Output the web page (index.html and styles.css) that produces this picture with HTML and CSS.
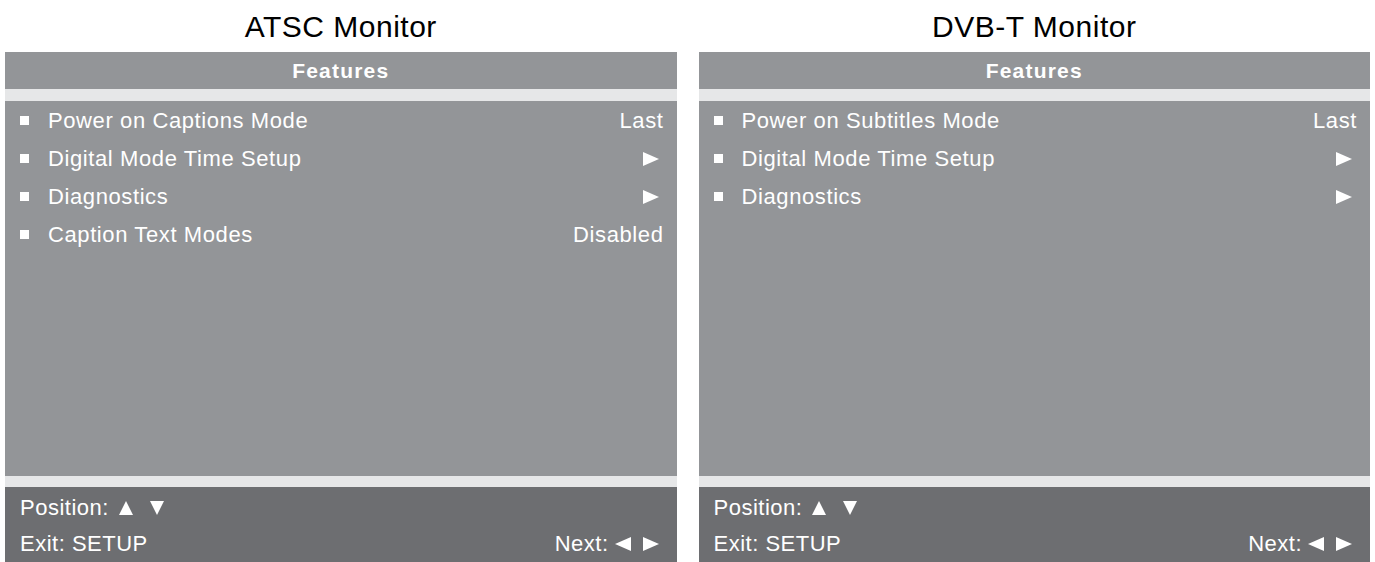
FILE: index.html
```html
<!DOCTYPE html>
<html lang="en">

<head>
    <meta charset="UTF-8">
    <title>Features Menu</title>
    <link rel="stylesheet" href="styles.css">
</head>

<body>
    <div class="page">
        <!-- ATSC -->
        <div class="monitor">
            <div class="monitor_title">ATSC Monitor</div>
            <div class="menu_head">Features</div>
            <div class="strip"></div>
            <ul class="menu_list">
                <li><span class="bullet"></span><span class="label">Power on Captions Mode</span><span class="value">Last</span></li>
                <li><span class="bullet"></span><span class="label">Digital Mode Time Setup</span><svg class="arrow" viewBox="0 0 16 14"><polygon points="0,0 16,7 0,14"/></svg></li>
                <li><span class="bullet"></span><span class="label">Diagnostics</span><svg class="arrow" viewBox="0 0 16 14"><polygon points="0,0 16,7 0,14"/></svg></li>
                <li><span class="bullet"></span><span class="label">Caption Text Modes</span><span class="value">Disabled</span></li>
            </ul>
            <div class="strip strip_low"></div>
            <div class="menu_foot">
                <div class="foot_line">Position:
                    <svg class="tri tri_up" viewBox="0 0 14 14"><polygon points="7,0 14,14 0,14"/></svg>
                    <svg class="tri tri_down" viewBox="0 0 14 14"><polygon points="0,0 14,0 7,14"/></svg>
                </div>
                <div class="foot_line">
                    <span>Exit: SETUP</span>
                    <span class="next">Next:
                        <svg class="tri tri_left" viewBox="0 0 16 14"><polygon points="16,0 16,14 0,7"/></svg>
                        <svg class="tri tri_right" viewBox="0 0 16 14"><polygon points="0,0 16,7 0,14"/></svg>
                    </span>
                </div>
            </div>
        </div>

        <!-- DVB-T -->
        <div class="monitor">
            <div class="monitor_title">DVB-T Monitor</div>
            <div class="menu_head">Features</div>
            <div class="strip"></div>
            <ul class="menu_list">
                <li><span class="bullet"></span><span class="label">Power on Subtitles Mode</span><span class="value">Last</span></li>
                <li><span class="bullet"></span><span class="label">Digital Mode Time Setup</span><svg class="arrow" viewBox="0 0 16 14"><polygon points="0,0 16,7 0,14"/></svg></li>
                <li><span class="bullet"></span><span class="label">Diagnostics</span><svg class="arrow" viewBox="0 0 16 14"><polygon points="0,0 16,7 0,14"/></svg></li>
            </ul>
            <div class="strip strip_low"></div>
            <div class="menu_foot">
                <div class="foot_line">Position:
                    <svg class="tri tri_up" viewBox="0 0 14 14"><polygon points="7,0 14,14 0,14"/></svg>
                    <svg class="tri tri_down" viewBox="0 0 14 14"><polygon points="0,0 14,0 7,14"/></svg>
                </div>
                <div class="foot_line">
                    <span>Exit: SETUP</span>
                    <span class="next">Next:
                        <svg class="tri tri_left" viewBox="0 0 16 14"><polygon points="16,0 16,14 0,7"/></svg>
                        <svg class="tri tri_right" viewBox="0 0 16 14"><polygon points="0,0 16,7 0,14"/></svg>
                    </span>
                </div>
            </div>
        </div>
    </div>
</body>

</html>
```

FILE: styles.css
```css
* {
    margin: 0px;
    padding: 0px;
}

body {
    background: #fff;
    font-family: "Liberation Sans", Arial, sans-serif;
    color: #fff;
}
/*
 * two monitors side by side
 */

.page {
    display: flex;
    gap: 22px;
    padding: 0 5px;
    height: 562px;
    overflow: hidden;
}

.monitor {
    flex: 1;
    display: flex;
    flex-direction: column;
}

.monitor_title {
    height: 52px;
    line-height: 53px;
    text-align: center;
    font-size: 30px;
    letter-spacing: 0.5px;
    color: #000;
    background: #fff;
}
/*
 * menu header
 */

.menu_head {
    height: 37px;
    line-height: 38px;
    text-align: center;
    font-size: 21px;
    font-weight: bold;
    letter-spacing: 1.2px;
    background: #939598;
}

.strip {
    height: 12px;
    background: #e6e7e8;
}

.strip_low {
    height: 11px;
}
/*
 * menu items
 */

.menu_list {
    list-style: none;
    height: 377px;
    padding-top: 1px;
    background: #939598;
}

.menu_list li {
    display: flex;
    align-items: center;
    height: 38px;
    padding: 0 14px 0 15px;
    font-size: 22px;
    letter-spacing: 0.6px;
}

.bullet {
    width: 9px;
    height: 9px;
    background: #fff;
    margin-right: 19px;
}

.label {
    flex: 1;
}

.value {
    margin-right: -1px;
}

.arrow {
    width: 16px;
    height: 14px;
    margin-right: 4px;
    fill: #fff;
}
/*
 * footer
 */

.menu_foot {
    flex: 1;
    padding: 3px 18px 0 15px;
    background: #6d6e71;
    font-size: 22px;
    letter-spacing: 0.5px;
}

.foot_line {
    display: flex;
    align-items: center;
    height: 36px;
}

.foot_line .next {
    margin-left: auto;
    display: flex;
    align-items: center;
}

.tri {
    height: 14px;
    fill: #fff;
}

.tri_up,
.tri_down {
    width: 14px;
}

.tri_up {
    margin-left: 10px;
}

.tri_down {
    margin-left: 17px;
}

.tri_left,
.tri_right {
    width: 16px;
}

.tri_left {
    margin-left: 6px;
}

.tri_right {
    margin-left: 12px;
}
```
